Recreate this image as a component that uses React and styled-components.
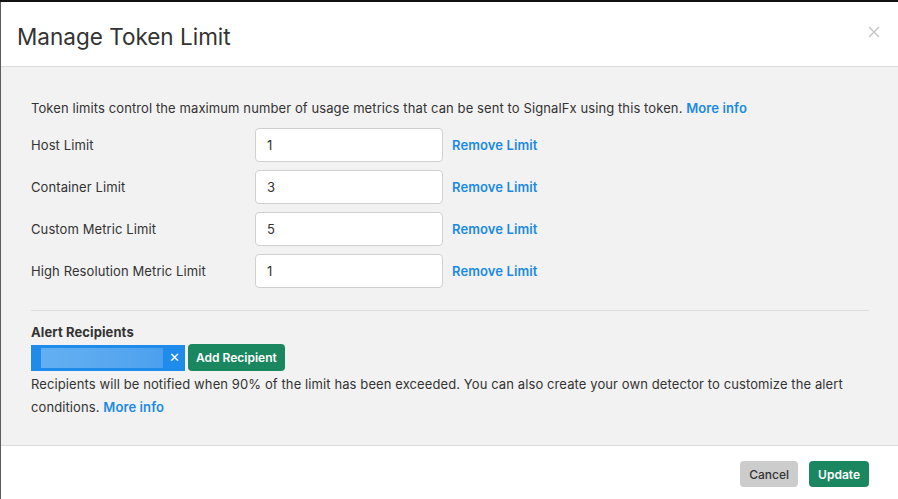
import styled, { createGlobalStyle } from 'styled-components';

const GlobalStyle = createGlobalStyle`
  html, body {
    margin: 0;
    padding: 0;
    background: #5c5c5c;
  }
  body {
    font-family: Inter, "Liberation Sans", sans-serif;
    color: #333;
  }
`;

const Page = styled.div`
  width: 898px;
  height: 499px;
  box-sizing: border-box;
  border-top: 2px solid #111;
  padding-left: 1px;
  overflow: hidden;
  display: flex;
`;

const Modal = styled.div`
  flex: 1;
  display: flex;
  flex-direction: column;
  background: #fff;
`;

const Header = styled.div`
  height: 65px;
  box-sizing: border-box;
  display: flex;
  align-items: center;
  justify-content: space-between;
  padding: 4px 16px 0 16px;
  border-bottom: 1px solid #dcdcdc;
  h1 {
    margin: 0;
    font-size: 22.5px;
    font-weight: 400;
    color: #333;
  }
`;

const CloseBtn = styled.button`
  all: unset;
  width: 14px;
  height: 14px;
  margin: -8px 1px 0 0;
  display: flex;
  cursor: pointer;
`;

const Body = styled.div`
  background: #f2f2f2;
  padding: 31px 29px 0 30px;
  height: 379px;
  box-sizing: border-box;
  border-bottom: 1px solid #dcdcdc;
  font-size: 13px;
  letter-spacing: 0.1px;
`;

const Intro = styled.p`
  margin: 0 0 10px;
  line-height: 20px;
`;

const Link = styled.a`
  color: #1a8ae6;
  font-weight: 600;
  text-decoration: none;
  cursor: pointer;
`;

const LimitRow = styled.div`
  display: grid;
  grid-template-columns: 224px 188px auto;
  align-items: center;
  margin-bottom: 8px;
  ${Link} {
    margin-left: 9px;
  }
`;

const LimitInput = styled.input`
  box-sizing: border-box;
  height: 34px;
  width: 100%;
  border: 1px solid #d0d0d0;
  border-radius: 4px;
  background: #fff;
  padding: 0 11px;
  font: inherit;
  font-size: 13px;
  color: #333;
  outline: none;
`;

const Divider = styled.hr`
  border: none;
  border-top: 1px solid #dcdcdc;
  margin: 22px 0 12px;
`;

const SectionTitle = styled.div`
  font-weight: 700;
  line-height: 18px;
  margin-bottom: 3px;
`;

const RecipientRow = styled.div`
  display: flex;
  align-items: center;
  gap: 3px;
`;

const Chip = styled.div`
  width: 154px;
  height: 26px;
  box-sizing: border-box;
  background: #1f8ceb;
  display: flex;
  align-items: center;
  padding: 0 5px 0 10px;
  gap: 6px;
`;

const Blurred = styled.div`
  flex: 1;
  height: 20px;
  background: linear-gradient(90deg, #63aff2, #5aa9f0 50%, #4ba0ee);
`;

const ChipClose = styled.span`
  color: #fff;
  font-size: 13px;
  line-height: 1;
`;

const Button = styled.button`
  height: ${(p) => p.$h || 26}px;
  padding: 0 ${(p) => p.$px || 10}px;
  border: none;
  border-radius: 4px;
  font-family: inherit;
  font-size: ${(p) => p.$fs || 12}px;
  font-weight: ${(p) => (p.$variant === 'secondary' ? 500 : 600)};
  cursor: pointer;
  background: ${(p) => (p.$variant === 'secondary' ? '#cccccc' : '#1b8760')};
  color: ${(p) => (p.$variant === 'secondary' ? '#333' : '#fff')};
`;

const Note = styled.p`
  margin: 2px 0 0;
  line-height: 23px;
`;

const Footer = styled.div`
  flex: 1;
  display: flex;
  justify-content: flex-end;
  align-items: flex-start;
  gap: 11px;
  padding: 15px 29px 0 0;
`;

const limits = [
  { label: 'Host Limit', value: '1' },
  { label: 'Container Limit', value: '3' },
  { label: 'Custom Metric Limit', value: '5' },
  { label: 'High Resolution Metric Limit', value: '1' },
];

const App = () => {
  return (
    <>
      <GlobalStyle />
      <Page>
        <Modal>
          <Header>
            <h1>Manage Token Limit</h1>
            <CloseBtn aria-label="close">
              <svg width="14" height="14" viewBox="0 0 14 14">
                <path d="M2 2 L12 12 M12 2 L2 12" stroke="#c8c8c8" strokeWidth="1.6" />
              </svg>
            </CloseBtn>
          </Header>
          <Body>
            <Intro>
              Token limits control the maximum number of usage metrics that can be sent to
              SignalFx using this token. <Link>More info</Link>
            </Intro>
            {limits.map((l) => (
              <LimitRow key={l.label}>
                <span>{l.label}</span>
                <LimitInput defaultValue={l.value} />
                <Link>Remove Limit</Link>
              </LimitRow>
            ))}
            <Divider />
            <SectionTitle>Alert Recipients</SectionTitle>
            <RecipientRow>
              <Chip>
                <Blurred />
                <ChipClose>✕</ChipClose>
              </Chip>
              <Button $h={27} $px={8} $fs={12}>Add Recipient</Button>
            </RecipientRow>
            <Note>
              Recipients will be notified when 90% of the limit has been exceeded. You can also
              create your own detector to customize the alert conditions. <Link>More info</Link>
            </Note>
          </Body>
          <Footer>
            <Button $variant="secondary" $px={9}>Cancel</Button>
            <Button $px={9}>Update</Button>
          </Footer>
        </Modal>
      </Page>
    </>
  );
};

export default App;
